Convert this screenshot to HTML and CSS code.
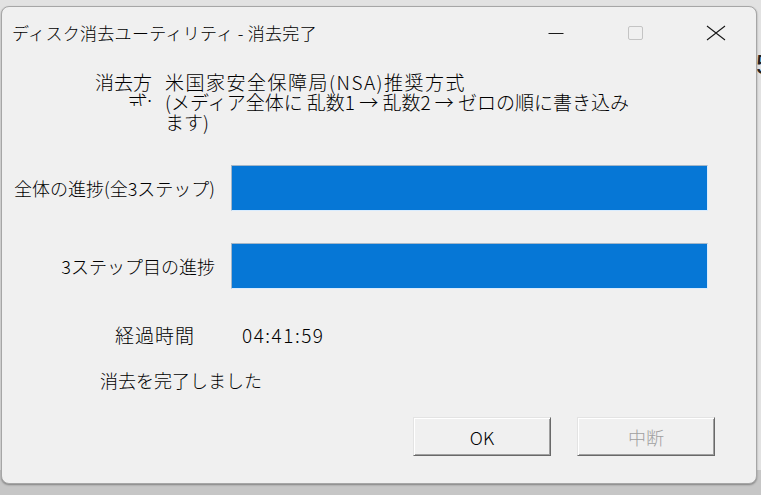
FILE: index.html
```html
<!DOCTYPE html>
<html lang="ja">
<head>
<meta charset="utf-8">
<title>ディスク消去ユーティリティ - 消去完了</title>
<link rel="stylesheet" href="styles.css">
</head>
<body>
<div class="desk-edge">5</div>
<div class="window">
  <div class="titlebar">
    <div class="title">ディスク消去ユーティリティ - 消去完了</div>
    <div class="controls">
      <div class="ctrl">
        <svg width="16" height="16" viewBox="0 0 16 16"><line x1="0.5" y1="8.5" x2="15.5" y2="8.5" stroke="#1a1a1a" stroke-width="1"/></svg>
      </div>
      <div class="ctrl">
        <svg width="16" height="16" viewBox="0 0 16 16"><rect x="0.5" y="1.5" width="14" height="13" rx="1.5" fill="none" stroke="#c4c4c4" stroke-width="1"/></svg>
      </div>
      <div class="ctrl">
        <svg width="20" height="16" viewBox="0 0 20 16"><path d="M1 1 L19 15 M19 1 L1 15" stroke="#1a1a1a" stroke-width="1.1" fill="none"/></svg>
      </div>
    </div>
  </div>
  <div class="content">
    <div class="method">
      <div class="method-label">消去方式:</div>
      <div class="method-value"><span class="first-line">米国家安全保障局(NSA)推奨方式</span><br>(メディア全体に 乱数1 → 乱数2 → ゼロの順に書き込み<br>ます)</div>
    </div>
    <div class="progress-row">
      <div class="progress-label">全体の進捗(全3ステップ)</div>
      <div class="bar"><div class="fill" style="width:100%"></div></div>
    </div>
    <div class="progress-row second">
      <div class="progress-label">3ステップ目の進捗</div>
      <div class="bar"><div class="fill" style="width:100%"></div></div>
    </div>
    <div class="elapsed">
      <div class="elapsed-label">経過時間</div>
      <div class="elapsed-value">04:41:59</div>
    </div>
    <div class="message">消去を完了しました</div>
    <div class="buttons">
      <button class="btn">OK</button>
      <button class="btn disabled">中断</button>
    </div>
  </div>
</div>
</body>
</html>
```
FILE: styles.css
```css
html, body {
  margin: 0;
  padding: 0;
}
body {
  width: 761px;
  height: 495px;
  overflow: hidden;
  position: relative;
  background: linear-gradient(to bottom, #e2e2e2 0, #e2e2e2 470px, #c6c6c6 470px, #c6c6c6 100%);
  font-family: "Noto Sans CJK JP", "Noto Sans", sans-serif;
  color: #000;
}
.desk-edge {
  position: absolute;
  left: 756px;
  top: 50px;
  font-size: 28px;
  line-height: 30px;
  color: #222;
  font-family: "Liberation Sans", sans-serif;
}
.window {
  position: relative;
  margin: 6px 0 0 1px;
  width: 756px;
  height: 478px;
  box-sizing: border-box;
  background: #f0f0f0;
  border: 1px solid #a6a6a6;
  border-radius: 8px;
  box-shadow: 0 1px 2px rgba(0,0,0,0.35);
  overflow: hidden;
}
.titlebar {
  display: flex;
  align-items: center;
  height: 51px;
}
.title {
  padding-left: 10px;
  font-size: 17px;
  font-weight: 300;
  letter-spacing: 0.3px;
  white-space: nowrap;
}
.controls {
  display: flex;
  margin-left: auto;
  margin-right: 0;
  height: 100%;
}
.ctrl {
  width: 80px;
  height: 100%;
  display: flex;
  align-items: center;
  justify-content: center;
}
.ctrl svg { display: block; }
.content {
  padding-top: 14px;
  font-size: 18px;
  line-height: 20px;
  font-weight: 300;
}
.method {
  display: flex;
  padding-left: 88px;
  font-size: 19px;
}
.method-label {
  width: 62px;
  height: 34px;
  overflow: hidden;
  text-align: right;
}
.method-value {
  margin-left: 13px;
  white-space: nowrap;
}
.first-line {
  letter-spacing: 1.5px;
}
.progress-row {
  display: flex;
  align-items: center;
  margin-top: 33px;
}
.progress-row.second {
  margin-top: 32px;
}
.progress-label {
  width: 213px;
  text-align: right;
  white-space: nowrap;
}
.bar {
  margin-left: 16px;
  width: 477px;
  height: 46px;
  box-sizing: border-box;
  border: 1px solid;
  border-color: #a3b6c8 #d8ecff #d8ecff #a3b6c8;
  background: #e6e6e6;
}
.fill {
  height: 100%;
  background: #0677d6;
}
.elapsed {
  display: flex;
  padding-left: 113px;
  margin-top: 36px;
  font-size: 19px;
}
.elapsed-label {
  width: 127px;
  letter-spacing: 1px;
}
.elapsed-value {
  letter-spacing: 1.5px;
}
.message {
  padding-left: 98px;
  margin-top: 25px;
}
.buttons {
  display: flex;
  justify-content: flex-end;
  gap: 26px;
  padding-right: 41px;
  margin-top: 27px;
}
.btn {
  width: 138px;
  height: 39px;
  box-sizing: border-box;
  background: #f0f0f0;
  border: 1px solid;
  border-color: #e3e3e3 #696969 #696969 #e3e3e3;
  box-shadow: inset 1px 1px #ffffff, inset -1px -1px #a0a0a0;
  font-family: "Noto Sans CJK JP", "Noto Sans", sans-serif;
  font-size: 18px;
  font-weight: 300;
  color: #000;
  padding: 0;
}
.btn.disabled {
  color: #a0a0a0;
}
```
